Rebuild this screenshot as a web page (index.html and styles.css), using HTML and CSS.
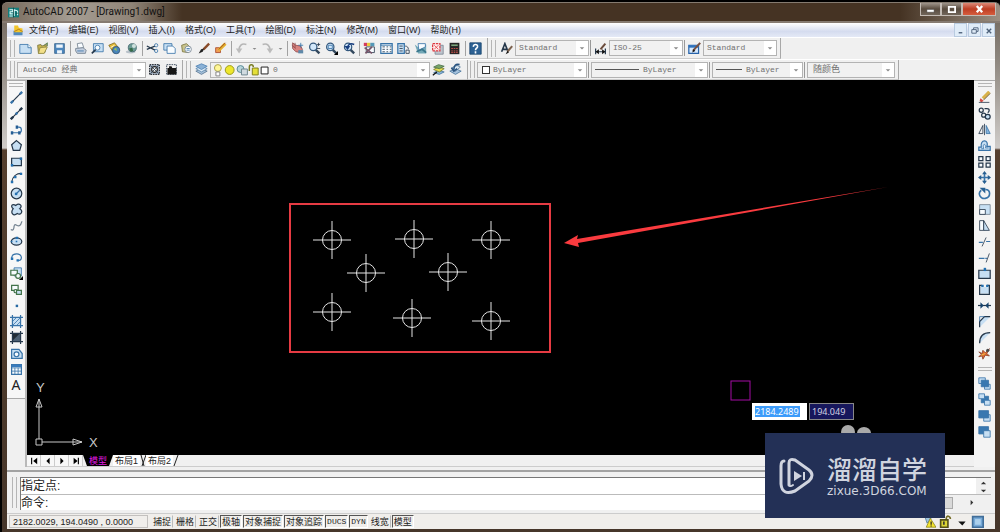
FILE: index.html
```html
<!DOCTYPE html>
<html lang="zh-CN">
<head>
<meta charset="utf-8">
<title>AutoCAD 2007 - [Drawing1.dwg]</title>
<link rel="stylesheet" href="styles.css">
</head>
<body>
<svg class="defs" aria-hidden="true">
  <symbol id="caret" viewBox="0 0 8 8"><path d="M1 3h6L4 6z" fill="#8a8a8a"/></symbol>
  <symbol id="mag" viewBox="0 0 16 16"><path d="M9 9l5 5" stroke="#34495e" stroke-width="3"/><circle cx="6.500" cy="6" r="4.500" fill="#d3e8fa" stroke="#34587d" stroke-width="1.500"/></symbol>
  <symbol id="target" viewBox="0 0 40 40"><circle cx="20" cy="20" r="9.500"/><path d="M1 20h38M20 1v38"/></symbol>
</svg>
<div class="window">
  <header class="titlebar">
    <svg class="app-icon" viewBox="0 0 16 16"><path fill="#137d7b" d="M0 1h16v14H0z"/><path fill="none" stroke="#e5ffff" stroke-width="1.500" d="M2 4h5v3H3v3h4M9 13V4l5 2v6M2 13h5"/><path stroke="#083c3b" d="M8 1v14M11 9h4"/></svg>
    <h1>AutoCAD 2007 - [Drawing1.dwg]</h1>
    <div class="caption-buttons">
      <button aria-label="最小化"><svg viewBox="0 0 12 10"><path d="M2 5h8v3H2z" fill="#fff" stroke="#444" stroke-width=".5"/></svg></button>
      <button aria-label="最大化"><svg viewBox="0 0 12 10"><path d="M3 2h7v6H3z" fill="none" stroke="#fff" stroke-width="2"/></svg></button>
      <button class="close" aria-label="关闭"><svg viewBox="0 0 12 10"><path d="M3 1l6 7M9 1L3 8" stroke="#fff" stroke-width="2.500"/></svg></button>
    </div>
  </header>
  <div class="client">
    <nav class="menubar">
      <svg class="doc-icon" viewBox="0 0 16 16"><path fill="#5289bb" d="M2 9h12v6H2z"/><path fill="#f2c52b" d="M3 2h5l1 3 5 1v5H3z"/><path d="M3 10l6-3 5 3" stroke="#a76b13" fill="none"/></svg>
      <button>文件(F)</button><button>编辑(E)</button><button>视图(V)</button><button>插入(I)</button><button>格式(O)</button><button>工具(T)</button><button>绘图(D)</button><button>标注(N)</button><button>修改(M)</button><button>窗口(W)</button><button>帮助(H)</button>
      <div class="mdi">
        <button aria-label="最小化文档"><svg viewBox="0 0 10 10"><path d="M3 7.500h4" stroke="#4c6079" stroke-width="1.500"/></svg></button>
        <button aria-label="还原文档"><svg viewBox="0 0 10 10"><path d="M4 4V2h5v4H7M2 4h5v4H2z" fill="none" stroke="#4c6079"/></svg></button>
        <button aria-label="关闭文档"><svg viewBox="0 0 10 10"><path d="M3 3l5 5M8 3L3 8" stroke="#4c6079" stroke-width="1.500"/></svg></button>
      </div>
    </nav>

    <div class="toolrow standard">
      <div class="toolbar">
        <i class="grip"></i>
        <button aria-label="新建"><svg class="ic" viewBox="0 0 16 16"><path class="b fl" d="M1 3h10l4 4v7H1z"/><path class="b fw" d="M11 3v4h4"/></svg></button>
        <button aria-label="打开"><svg class="ic" viewBox="0 0 16 16"><path d="M2 4l4-1 1 2 6-2-2 10-8 1z" fill="#c9b450" stroke="#78733b"/><path d="M5 7l9-1-4 8-7 0z" fill="#f3e08a" stroke="#8f8843"/><path d="M10 4l4-3v4" stroke="#4a7541"/></svg></button>
        <button aria-label="保存"><svg class="ic" viewBox="0 0 16 16"><path d="M2 2h12v12H2z" fill="#4c86bd" stroke="#3b678f"/><path d="M4 3h8v4H4zM5 10h6v4H5z" fill="#edf5fc"/></svg></button>
        <i class="sep"></i>
        <button aria-label="打印"><svg class="ic" viewBox="0 0 16 16"><path class="g fw" d="M4 2l6-1 2 6-7 1z"/><path class="g" fill="#c3cede" d="M2 8l9-1 4 3-1 4H4l-2-3z"/><path class="b" d="M4 11h8"/></svg></button>
        <button aria-label="打印预览"><svg class="ic" viewBox="0 0 16 16"><path class="b fl" d="M3 2h12v10H3z"/><path class="d" stroke-width="2" d="M6 9l-5 5"/><circle class="b fw" cx="8" cy="7" r="3"/></svg></button>
        <button aria-label="发布"><svg class="ic" viewBox="0 0 16 16"><path d="M1 4l7-3 5 6-7 5z" fill="#e7bd36" stroke="#7d6924"/><circle cx="10" cy="10" r="4.500" fill="#4a85ba" stroke="#315576"/><path d="M7 9l3-2 1 4z" fill="#95c55d"/><path d="M3 7l5-3" stroke="#fff"/></svg></button>
        <button aria-label="三维 DWF"><svg class="ic" viewBox="0 0 16 16"><ellipse cx="7" cy="12" rx="6" ry="2" fill="#b9c2ca"/><circle cx="9" cy="7" r="5" fill="#6d9b96" stroke="#3d646a"/><circle cx="11" cy="5" r="2.500" fill="#cfe1dd"/><path d="M5 8l4-1 1 4-3 1z" fill="#356b47"/></svg></button>
        <i class="sep"></i>
        <button aria-label="剪切"><svg class="ic" viewBox="0 0 16 16"><path class="d" stroke-width="1.500" d="M1 5l10 5M1 9l10-4"/><circle class="b" cx="12.500" cy="4" r="2"/><circle class="b" cx="12.500" cy="11" r="2"/></svg></button>
        <button aria-label="复制"><svg class="ic" viewBox="0 0 16 16"><path class="b fl" d="M1 2h10v8H1z"/><path class="b fw" d="M5 5h7l3 3v6H5z"/></svg></button>
        <button aria-label="粘贴"><svg class="ic" viewBox="0 0 16 16"><path d="M2 4l6-2 4 4-2 7-7-1z" fill="#c9c48d" stroke="#78713b"/><circle class="g fw" cx="10" cy="9" r="4"/><path class="b" d="M8 8h4M8 10h4"/></svg></button>
        <button aria-label="特性匹配"><svg class="ic" viewBox="0 0 16 16"><path d="M15 2L8 9" stroke="#8a4b28" stroke-width="3"/><path d="M9 8l-2 4-5 2 3-5z" fill="#222"/></svg></button>
        <button aria-label="块编辑器"><svg class="ic" viewBox="0 0 16 16"><path d="M2 7h6v6H2z" fill="#ef9e54" stroke="#a8452b"/><path d="M14 2L6 10" stroke="#e4b22c" stroke-width="4"/><path d="M14 1L6 9" stroke="#913a26"/></svg></button>
        <i class="sep"></i>
        <button aria-label="放弃"><svg class="ic" viewBox="0 0 16 16"><path d="M14 3C8 1 5 5 5 10" stroke="#b6b6b6" stroke-width="2"/><path d="M1 8h8l-4 6z" fill="#bcbcbc"/></svg></button><button class="drop" aria-label="放弃列表"><svg viewBox="0 0 8 8"><use href="#caret"/></svg></button>
        <button aria-label="重做"><svg class="ic" viewBox="0 0 16 16"><path d="M2 3c6-2 9 2 9 7" stroke="#b6b6b6" stroke-width="2"/><path d="M7 8h8l-4 6z" fill="#bcbcbc"/></svg></button><button class="drop" aria-label="重做列表"><svg viewBox="0 0 8 8"><use href="#caret"/></svg></button>
        <i class="sep"></i>
        <button aria-label="实时平移"><svg class="ic" viewBox="0 0 16 16"><path d="M2 1l4 3 6 1 2 4-2 4-6-1-4-4z" fill="#d88380" stroke="#8f4b4b"/><path d="M1 4l5 4M5 1v6" stroke="#8f4b4b"/><path d="M9 4h6M12 1v6" stroke="#3474a8"/><path d="M9 10h6v4H9z" fill="#5f89a9"/></svg></button>
        <button aria-label="实时缩放"><svg class="ic" viewBox="0 0 16 16"><use href="#mag"/><path class="d" d="M11 3h4M13 1v4M11 8h4"/></svg></button>
        <button aria-label="窗口缩放"><svg class="ic" viewBox="0 0 16 16"><use href="#mag"/><path class="b" d="M4 4h5v4H4z"/><path fill="#000" d="M16 11v5h-5z"/></svg></button>
        <button aria-label="缩放上一个"><svg class="ic" viewBox="0 0 16 16"><g transform="translate(1)"><use href="#mag"/></g><path d="M15 3c-5-2-7 0-8 3" stroke="#183e80" stroke-width="2"/><path d="M3 5h7l-3 5z" fill="#183e80"/></svg></button>
        <i class="sep"></i>
        <button aria-label="特性"><svg class="ic" viewBox="0 0 16 16"><path d="M1 1h4v4H1z" fill="#d43c5d"/><path d="M5 1h4v4H5z" fill="#ecc939"/><path d="M9 1h5v4H9z" fill="#5598b8"/><path class="d fw" d="M4 6h10v7H4z"/><path d="M2 7l9 7M11 6l-8 8" stroke="#765468" stroke-width="2"/></svg></button>
        <button aria-label="设计中心"><svg class="ic" viewBox="0 0 16 16"><path class="b fw" stroke-width="1.500" d="M1 2h14v12H1z"/><path class="b" d="M1 4h14"/><path class="d" d="M3 6h3M3 9h3M3 12h3M8 6h2M12 6h2M8 9h2M12 9h2M8 12h2M12 12h2"/></svg></button>
        <button aria-label="工具选项板"><svg class="ic" viewBox="0 0 16 16"><path class="b fl" stroke-width="1.500" d="M1 2h8v12H1z"/><path class="d" d="M3 5h4M3 8h4M3 11h4M10 5c3 0 4 2 4 4M11 10h4v4h-4z"/></svg></button>
        <button aria-label="图纸集"><svg class="ic" viewBox="0 0 16 16"><path d="M1 3l5 4 9-4v11H5z" fill="#73a8b7"/><path class="b fw" d="M5 2h9v4l-8 4z"/><path d="M3 12l7-3 5 4" stroke="#38758b" stroke-width="2"/></svg></button>
        <button aria-label="标记集"><svg class="ic" viewBox="0 0 16 16"><path d="M5 4h10v11H5z" fill="#bec5ce" stroke="#7b8794"/><path d="M2 2h9v9H2z" fill="#ffe8e8" stroke="#db3940" stroke-width="1.500" stroke-dasharray="3 1"/><path d="M4 4l5 5M9 4L4 9" stroke="#e04447"/></svg></button>
        <button aria-label="计算器"><svg class="ic" viewBox="0 0 16 16"><path d="M2 1h12v14H2z" fill="#252525"/><path d="M4 3h8v2H4z" fill="#7ca57b"/><path d="M4 8h8M4 11h8M4 13h8" stroke="#e05750" stroke-dasharray="2 1"/></svg></button>
        <i class="sep"></i>
        <button aria-label="帮助"><svg class="ic" viewBox="0 0 16 16"><path d="M1 1h14v14H1z" fill="#2d6193" stroke="#18446e"/><path d="M5.500 6C5 2 11 2 10.500 6 10 8 8 7.500 8 10M8 11.500V14" stroke="#fff" stroke-width="2"/></svg></button>
      </div>
      <div class="toolbar styles">
        <i class="grip"></i>
        <button aria-label="文字样式"><svg class="ic" viewBox="0 0 16 16"><path class="d" stroke-width="2" d="M2 12L6 2l4 10M3 9h6"/><path d="M15 5l-6 7" stroke="#7b614d" stroke-width="2.500"/><path d="M9 11l-2 4 4-2z" fill="#111"/></svg></button>
        <span class="combo w-style"><select aria-label="文字样式名"><option>Standard</option></select><svg viewBox="0 0 8 8"><use href="#caret"/></svg></span>
        <i class="line"></i>
        <button aria-label="标注样式"><svg class="ic" viewBox="0 0 16 16"><path class="d" stroke-width="1.500" d="M2 8v7M14 8v7M2 12h12"/><path d="M2 12l4-3v6zM14 12l-4-3v6z" fill="#111"/><path d="M14 2L8 9" stroke="#6b4c3c" stroke-width="2.500"/></svg></button>
        <span class="combo w-style"><select aria-label="标注样式名"><option>ISO-25</option></select><svg viewBox="0 0 8 8"><use href="#caret"/></svg></span>
        <i class="line"></i>
        <button aria-label="表格样式"><svg class="ic" viewBox="0 0 16 16"><path d="M1 4h12v10H1z" fill="#d7eaff" stroke="#2763aa" stroke-width="1.500"/><path d="M1 4h12v3H1z" fill="#2f72bd"/><path d="M15 1L6 11" stroke="#785142" stroke-width="2.500"/><path d="M7 9l-2 4 4-2z" fill="#111"/></svg></button>
        <span class="combo w-style"><select aria-label="表格样式名"><option>Standard</option></select><svg viewBox="0 0 8 8"><use href="#caret"/></svg></span>
      </div>
    </div>

    <div class="toolrow">
      <div class="toolbar workspace">
        <i class="grip"></i>
        <span class="combo w-space"><select aria-label="工作空间"><option>AutoCAD 经典</option></select><svg viewBox="0 0 8 8"><use href="#caret"/></svg></span>
        <button aria-label="工作空间设置"><svg class="ic" viewBox="0 0 16 16"><path d="M2 2h12v12H2z" fill="#aebdce" stroke="#30353c" stroke-width="1.500" stroke-dasharray="2 1"/><circle cx="8" cy="8" r="3.500" fill="#eee" stroke="#222" stroke-width="1.500"/><path class="d" d="M3 3l10 10M13 3L3 13"/></svg></button>
        <button aria-label="我的工作空间"><svg class="ic" viewBox="0 0 16 16"><path class="d" stroke-dasharray="2 1" d="M2 2h12v12H2z"/><path fill="#171717" d="M3 6h2V4h3l1 2h5v8H3z"/></svg></button>
      </div>
      <div class="toolbar layers">
        <i class="grip"></i>
        <button aria-label="图层特性"><svg class="ic" viewBox="0 0 16 16"><path d="M1 10l7-3 7 3-7 4z" fill="#a7c1da" stroke="#5b7892"/><path d="M1 7l7-3 7 3-7 4z" fill="#dcebf7" stroke="#5b86ad"/><path d="M1 4l7-3 7 3-7 4z" fill="#8ab1d6" stroke="#4f82b4"/></svg></button>
        <span class="combo w-layer">
          <svg class="layer-state" viewBox="0 0 60 14"><circle cx="7" cy="5" r="3.500" fill="#fff797" stroke="#aaa24c"/><path d="M5 9h4v4H5z" fill="#fff" stroke="#888"/><circle cx="19" cy="7" r="4.500" fill="#eee72c" stroke="#9a9920"/><circle cx="30" cy="6" r="3.500" fill="#b7d5dc" stroke="#5b8b96"/><path d="M31 6h6v6h-6z" fill="#d1dbe0" stroke="#6e8791"/><path d="M39 8V4c0-3 4-3 4 0" fill="none" stroke="#777b20" stroke-width="1.500"/><path d="M42 5h6v7h-6z" fill="#e4df38" stroke="#82801d"/><path d="M51 4h7v7h-7z" fill="#fff" stroke="#222"/></svg>
          <select aria-label="图层"><option>0</option></select><svg viewBox="0 0 8 8"><use href="#caret"/></svg></span>
        <button aria-label="置为当前图层"><svg class="ic" viewBox="0 0 16 16"><path d="M2 12l6-3 7 2-6 3z" fill="#8db6d9" stroke="#47779f"/><path d="M2 8l6-3 7 2-6 4z" fill="#e8df52" stroke="#777b2b"/><path d="M2 5l6-3 7 2-6 3z" fill="#79a567" stroke="#466e47"/><path d="M1 15l5-4" stroke="#111" stroke-width="1.500"/></svg></button>
        <button aria-label="上一个图层"><svg class="ic" viewBox="0 0 16 16"><path d="M1 10l7-3 7 3-7 4z" fill="#a5c2dd" stroke="#4a769e"/><path d="M3 6l7-3 4 2-6 5z" fill="#d8e6f1" stroke="#537899"/><path d="M13 2c-5-1-7 1-7 6M3 6l3 4 4-3" stroke="#28527e" stroke-width="2"/></svg></button>
      </div>
      <div class="toolbar props">
        <i class="grip"></i>
        <span class="combo w-color"><i class="swatch"></i><select aria-label="颜色"><option>ByLayer</option></select><svg viewBox="0 0 8 8"><use href="#caret"/></svg></span>
        <i class="line"></i>
        <span class="combo w-ltype"><i class="rule"></i><select aria-label="线型"><option>ByLayer</option></select><svg viewBox="0 0 8 8"><use href="#caret"/></svg></span>
        <i class="line"></i>
        <span class="combo w-lweight"><i class="rule short"></i><select aria-label="线宽"><option>ByLayer</option></select><svg viewBox="0 0 8 8"><use href="#caret"/></svg></span>
        <i class="line"></i>
        <span class="combo w-plot"><select aria-label="打印样式"><option>随颜色</option></select><svg viewBox="0 0 8 8"><use href="#caret"/></svg></span>
      </div>
    </div>

    <main class="workarea">
      <div class="side draw">
        <div class="palette">
        <i class="grip flat"></i>
        <button aria-label="直线"><svg class="ic" viewBox="0 0 16 16"><path class="d" stroke-width="1.500" d="M3 13L13 3"/><path class="b" stroke-width="3" d="M1 15l3-3M12 4l3-3"/></svg></button>
        <button aria-label="构造线"><svg class="ic" viewBox="0 0 16 16"><path class="d" stroke-width="1.500" d="M1 15L15 1"/><path class="d" stroke-width="3" d="M1 15l3-3M12 4l3-3"/><path class="b" stroke-width="3" d="M7 9l2-2"/></svg></button>
        <button aria-label="多段线"><svg class="ic" viewBox="0 0 16 16"><path class="b" stroke-width="1.500" d="M2 12h9c4 0 4-7 0-7H8"/><path fill="#245d94" d="M1 10h3v4H1zM7 3h3v4H7zM10 10h3v4h-3z"/></svg></button>
        <button aria-label="正多边形"><svg class="ic" viewBox="0 0 16 16"><path class="d fl" stroke-width="1.500" d="M8 2l6 5-2 7H4L2 7z"/></svg></button>
        <button aria-label="矩形"><svg class="ic" viewBox="0 0 16 16"><path class="d fl" stroke-width="1.500" d="M2 4h12v9H2z"/><path fill="#2370b1" d="M1 11h3v3H1zM12 3h3v3h-3z"/></svg></button>
        <button aria-label="圆弧"><svg class="ic" viewBox="0 0 16 16"><path class="d" stroke-width="1.500" d="M2 14C3 7 8 3 14 3"/><path fill="#2370b1" d="M1 12h3v3H1zM5 6h3v3H5zM12 2h3v3h-3z"/></svg></button>
        <button aria-label="圆"><svg class="ic" viewBox="0 0 16 16"><circle class="d fl" cx="8" cy="8" r="6.500" stroke-width="1.500"/><path class="b" stroke-width="1.500" d="M8 8l4-4"/><path fill="#2370b1" d="M6 7h3v3H6z"/></svg></button>
        <button aria-label="修订云线"><svg class="ic" viewBox="0 0 16 16"><path class="d fl" stroke-width="1.500" d="M4 7C0 4 3 0 7 3c5-4 9 1 5 4 5 3 1 9-3 6-5 4-9-1-5-6z"/></svg></button>
        <button aria-label="样条曲线"><svg class="ic" viewBox="0 0 16 16"><path class="g" stroke-width="1.500" d="M1 13c3 2 4-1 4-4 1-6 5 3 8-2 1-2 1-3 2-4"/></svg></button>
        <button aria-label="椭圆"><svg class="ic" viewBox="0 0 16 16"><ellipse class="d fl" cx="8" cy="8" rx="6.500" ry="4.500" stroke-width="1.500"/><path fill="#2370b1" d="M7 2h3v3H7zM7 7h2v2H7zM1 7h2v2H1z"/></svg></button>
        <button aria-label="椭圆弧"><svg class="ic" viewBox="0 0 16 16"><path class="b" stroke-width="1.500" d="M2 9c0-7 12-7 12-1 0 3-3 4-5 4"/><path fill="#2370b1" d="M1 8h3v3H1zM8 10h3v3H8z"/></svg></button>
        <button aria-label="插入块"><svg class="ic" viewBox="0 0 16 16"><path class="b fl" d="M5 1h9v10H5z"/><path class="n fw" stroke-width="1.500" d="M1 4h8v6H1z"/><circle class="n fw" cx="10" cy="11" r="3" stroke-width="1.500"/><path fill="#000" d="M16 11v5h-5z"/></svg></button>
        <button aria-label="创建块"><svg class="ic" viewBox="0 0 16 16"><path class="n fw" stroke-width="1.500" d="M2 3h8v6H2z"/><circle class="n fw" cx="7" cy="10" r="2" stroke-width="1.500"/><path class="n fl" stroke-width="1.500" d="M8 9h6v5H8z"/></svg></button>
        <button aria-label="点"><svg class="ic" viewBox="0 0 16 16"><path fill="#2769a3" d="M7 7h3v3H7z"/></svg></button>
        <button aria-label="图案填充"><svg class="ic" viewBox="0 0 16 16"><path class="fl" d="M3 3h10v10H3z"/><path class="b" d="M3 8l5-5M3 13L13 3M8 13l5-5"/><path class="b" stroke-width="1.500" d="M3 0v16M13 0v16M0 3h16M0 13h16"/></svg></button>
        <button aria-label="渐变色"><svg class="ic" viewBox="0 0 16 16"><path fill="#4d6073" d="M3 3h10v10H3z"/><path fill="#222c36" d="M3 3h9L3 12z"/><path class="d" stroke-width="1.500" d="M3 0v16M13 0v16M0 3h16M0 13h16"/></svg></button>
        <button aria-label="面域"><svg class="ic" viewBox="0 0 16 16"><path class="b fl" stroke-width="1.500" d="M2 3h9l4 5v6H2z"/><circle class="b fw" cx="8" cy="9" r="3" stroke-width="1.500"/></svg></button>
        <button aria-label="表格"><svg class="ic" viewBox="0 0 16 16"><path class="b fw" stroke-width="1.500" d="M2 2h12v12H2z"/><path class="b" d="M2 6h12M2 10h12M6 6v8M10 6v8"/><path fill="#397bbd" d="M2 2h12v3H2z"/></svg></button>
        <button class="mtext" aria-label="多行文字">A</button>
        </div>
      </div>

      <section class="viewport">
        <div class="canvas">
          <svg class="drawing" aria-label="模型空间">
            <g class="ucs"><path d="M9 359h6v6H9zM12 359v-32M15 362h31M12 319l-3 8h6zM46 359v6l9-3zM12 319v8M46 362h9"/><text x="9" y="312">Y</text><text x="62" y="367">X</text></g>
            <g class="targets">
              <use href="#target" x="285" y="140" width="40" height="40"/><use href="#target" x="367" y="139" width="40" height="40"/><use href="#target" x="444" y="140" width="40" height="40"/>
              <use href="#target" x="319" y="173" width="40" height="40"/><use href="#target" x="401" y="172" width="40" height="40"/>
              <use href="#target" x="285" y="212" width="40" height="40"/><use href="#target" x="365" y="218" width="40" height="40"/><use href="#target" x="444" y="221" width="40" height="40"/>
            </g>
            <rect class="mark" x="263" y="124" width="260" height="148"/>
            <path class="arrow" d="M537 163l14-8-1 4 311-52-310 56 1 4z"/>
            <rect class="pickbox" x="704" y="301" width="19" height="19"/>
            <ellipse cx="821" cy="352" rx="7" ry="7" fill="#aaa"/><ellipse cx="837" cy="353" rx="7" ry="6" fill="#aaa"/>
          </svg>
          <div class="dyn"><label class="active"><input aria-label="X 坐标" value="2184.2489"></label><label><input aria-label="Y 坐标" value="194.049"></label></div>
        </div>
        <div class="tabs">
          <button class="nav" aria-label="第一个布局"><svg viewBox="0 0 10 10"><path d="M2 1v8" stroke="#111" stroke-width="1.500"/><path d="M9 1v8L4 5z"/></svg></button>
          <button class="nav" aria-label="上一布局"><svg viewBox="0 0 10 10"><path d="M7 1v8L3 5z"/></svg></button>
          <button class="nav" aria-label="下一布局"><svg viewBox="0 0 10 10"><path d="M3 1v8l4-4z"/></svg></button>
          <button class="nav" aria-label="最后布局"><svg viewBox="0 0 10 10"><path d="M8 1v8" stroke="#111" stroke-width="1.500"/><path d="M2 1v8l5-4z"/></svg></button>
          <button class="tab current">模型</button>
          <button class="tab">布局1</button><svg class="slash" viewBox="0 0 6 11"><path d="M1 0l3 11M6 0L2 11"/></svg>
          <button class="tab">布局2</button><svg class="slash" viewBox="0 0 6 11"><path d="M5 0L1 11"/></svg>
        </div>
      </section>

      <div class="side modify">
        <i class="grip flat"></i>
        <button aria-label="删除"><svg class="ic" viewBox="0 0 16 16"><path d="M14 1L6 9" stroke="#d8b149" stroke-width="4"/><path d="M15 3L7 11" stroke="#5c4930"/><path d="M3 9l4 3-3 2-2-2z" fill="#d64c45"/><path class="d" d="M1 14h13"/></svg></button>
        <button aria-label="复制对象"><svg class="ic" viewBox="0 0 16 16"><g class="d" stroke-width="1.500"><circle cx="4" cy="4" r="2.500"/><circle cx="7" cy="10" r="2.500"/><circle class="fl" cx="12" cy="12" r="3"/><path d="M8 2h3c4 0 3 4 1 5"/></g></svg></button>
        <button aria-label="镜像"><svg class="ic" viewBox="0 0 16 16"><path class="d" d="M8 1v14M6 3v10H1z"/><path class="b" fill="#86b4dc" d="M10 3v10h5z"/></svg></button>
        <button aria-label="偏移"><svg class="ic" viewBox="0 0 16 16"><path class="b fl" stroke-width="1.500" d="M1 14v-4h3C2 0 14 0 11 9h4v5z"/><path class="b fw" d="M4 12h3C5 5 10 5 9 11h4"/></svg></button>
        <button aria-label="阵列"><svg class="ic" viewBox="0 0 16 16"><path class="d fw" stroke-width="1.500" d="M1 2h5v5H1zM10 2h5v5h-5zM1 10h5v5H1zM10 10h5v5h-5z"/></svg></button>
        <button aria-label="移动"><svg class="ic" viewBox="0 0 16 16"><path class="b" stroke-width="2" d="M8 2v12M2 8h12"/><path fill="#285f91" d="M8 0l3 4H5zM8 16l3-4H5zM0 8l4-3v6zM16 8l-4-3v6z"/></svg></button>
        <button aria-label="旋转"><svg class="ic" viewBox="0 0 16 16"><path class="b" stroke-width="2" d="M4 4C-1 8 3 15 9 14c7-1 7-11 0-11"/><path fill="#285f91" d="M2 1h7v7z"/></svg></button>
        <button aria-label="缩放"><svg class="ic" viewBox="0 0 16 16"><path class="g fl" d="M2 2h13v12H2z"/><path class="d fw" d="M2 8h7v6H2z"/></svg></button>
        <button aria-label="拉伸"><svg class="ic" viewBox="0 0 16 16"><path class="d fw" d="M2 2h5v12H2z"/><path class="d fl" d="M7 2l7 12H7z"/></svg></button>
        <button aria-label="修剪"><svg class="ic" viewBox="0 0 16 16"><path class="b" stroke-width="1.500" d="M1 9h5M10 8h5"/><path class="d" d="M5 14l5-11"/></svg></button>
        <button aria-label="延伸"><svg class="ic" viewBox="0 0 16 16"><path class="b" stroke-width="1.500" d="M1 9h7M9 9h2"/><path class="d" d="M10 14l4-11"/></svg></button>
        <button aria-label="打断于点"><svg class="ic" viewBox="0 0 16 16"><path class="d fl" stroke-width="1.500" d="M1 4h14v10H1z"/><path fill="#2370b1" d="M7 1h3v4H7z"/></svg></button>
        <button aria-label="打断"><svg class="ic" viewBox="0 0 16 16"><path class="fl" d="M3 5h11v8H3z"/><path class="d" stroke-width="1.500" d="M5 3H2v11h12V3h-3"/><path fill="#2370b1" d="M4 2h3v3H4zM10 2h3v3h-3z"/></svg></button>
        <button aria-label="合并"><svg class="ic" viewBox="0 0 16 16"><path class="d" stroke-width="1.500" d="M0 8h16"/><path fill="#16426c" d="M3 4l4 4-4 4zM13 4L9 8l4 4z"/></svg></button>
        <button aria-label="倒角"><svg class="ic" viewBox="0 0 16 16"><path class="fl" d="M2 15V7l6-5h7z"/><path class="d" stroke-width="1.500" d="M2 15V8l6-6h7"/><path class="b" d="M2 8V2h6"/></svg></button>
        <button aria-label="圆角"><svg class="ic" viewBox="0 0 16 16"><path class="fl" d="M2 15C2 6 7 2 15 2z"/><path class="d" stroke-width="1.500" d="M2 15C2 6 7 2 15 2"/></svg></button>
        <button aria-label="分解"><svg class="ic" viewBox="0 0 16 16"><path d="M1 6l4 2 1-4 3 3 5-5-3 6 3 3-5-1-3 5-1-4-4 1 3-3z" fill="#df692e" stroke="#87412c"/><circle cx="12" cy="4" r="2" fill="#4a4a4a"/><path stroke="#f3d04d" d="M4 10l5-2"/></svg></button>
        <i class="grip flat split"></i>
        <button aria-label="前置"><svg class="ic" viewBox="0 0 16 16"><path class="b fl" d="M1 1h8v7H1zM8 9h7v6H8z"/><path class="b" fill="#3978b0" d="M4 4h9v8H4z"/></svg></button>
        <button aria-label="后置"><svg class="ic" viewBox="0 0 16 16"><path class="b" fill="#3978b0" d="M4 4h9v8H4z"/><path class="b fl" d="M1 1h7v6H1zM8 9h7v6H8z"/></svg></button>
        <button aria-label="置于对象之上"><svg class="ic" viewBox="0 0 16 16"><path class="b fl" d="M7 7h8v8H7z"/><path class="b" fill="#3978b0" d="M1 2h12v9H1z"/></svg></button>
        <button aria-label="置于对象之下"><svg class="ic" viewBox="0 0 16 16"><path class="b" fill="#3978b0" d="M1 2h12v9H1z"/><path class="b fl" d="M7 7h8v8H7z"/></svg></button>
      </div>
    </main>

    <section class="command">
      <i class="grip"></i>
      <div class="console">
        <div class="history"><output>指定点:</output><span class="spin"><button aria-label="向上滚动"><svg viewBox="0 0 8 8"><path d="M1 6h6L4 3z" fill="#333"/></svg></button><button aria-label="向下滚动"><svg viewBox="0 0 8 8"><path d="M1 3h6L4 6z" fill="#333"/></svg></button></span></div>
        <div class="prompt"><label for="cmd">命令:</label><input id="cmd"><span class="hscroll"><i></i><button aria-label="向右滚动"><svg viewBox="0 0 8 8"><path d="M3 1v6l3-3z" fill="#333"/></svg></button></span></div>
      </div>
    </section>

    <footer class="status">
      <output class="coords">2182.0029, 194.0490 , 0.0000</output>
      <button>捕捉</button><button>栅格</button><button>正交</button><button class="on">极轴</button><button class="on">对象捕捉</button><button class="on">对象追踪</button><button class="on latin">DUCS</button><button class="on latin">DYN</button><button>线宽</button><button class="on">模型</button>
      <div class="tray">
        <button aria-label="通信中心"><svg class="ic" viewBox="0 0 16 16"><path d="M2 1l8 3-5 6z" fill="#9dc3df" stroke="#527c9b"/><path d="M9 4l7 11H4z" fill="#f5e52c" stroke="#8c8422"/><path d="M10 8v4M10 13v1" stroke="#222" stroke-width="1.500"/></svg></button>
        <button aria-label="锁定"><svg class="ic" viewBox="0 0 16 16"><path d="M9 7V4c0-4 5-3 5 1" stroke="#746c25" stroke-width="2"/><path d="M2 6h9v9H2z" fill="#dad434" stroke="#555019" stroke-width="2"/><path d="M6 8v4" stroke="#333" stroke-width="2"/></svg></button>
        <button aria-label="状态栏菜单"><svg class="ic" viewBox="0 0 16 16"><path d="M4 8h9l-4 5z" fill="#111"/></svg></button>
        <button aria-label="全屏显示"><svg class="ic" viewBox="0 0 16 16"><path d="M2 2h13v13H2z" fill="#77a9d6" stroke="#416e99" stroke-width="2"/><path d="M5 5h7v7H5z" fill="#acd0ec"/></svg></button>
      </div>
    </footer>
  </div>
</div>
<aside class="watermark">
  <svg viewBox="0 0 36 38"><g fill="none" stroke="#d0d4df" stroke-linecap="round" stroke-linejoin="round"><path stroke-width="3" d="M10 28V6q0-5 6-3l14 10q6 5 0 11L16 34Q3 39 2 27V9q0-5 3-5"/><path stroke-width="2" d="M10 26q0 5 4 2"/></g><path fill="#d0d4df" d="M15 14l8 5-8 5z"/><path stroke="#d0d4df" stroke-width="2" d="M25 15v8"/></svg>
  <div><strong>溜溜自学</strong><span>zixue.3D66.COM</span></div>
</aside>
</body>
</html>
```
FILE: styles.css
```css
* { box-sizing: border-box; }
body {
  margin: 0;
  background: #000;
  color: #222;
  font: 9px/12px "Liberation Sans", "Noto Sans CJK SC", sans-serif;
}
button, select, input { font: inherit; color: inherit; margin: 0; padding: 0; border: 0; background: none; border-radius: 0; }
button { display: flex; align-items: center; justify-content: center; white-space: nowrap; }
svg { display: block; flex: none; }
.defs { position: absolute; width: 0; height: 0; }
i { flex: none; }

.window {
  display: flex;
  flex-direction: column;
  height: 100vh;
  margin-left: 2px;
  padding: 3px 5px 3px;
  border-top: 2px solid #000;
  border-radius: 6px 6px 0 0;
  background: linear-gradient(#6d6359, #8f8880 60px, #cfccc9 146px, #553f2e 148px, #46362a);
}

.titlebar {
  display: flex;
  align-items: center;
  gap: 4px;
  height: 21px;
  margin: -3px -5px 0;
  padding-left: 6px;
  border-top: 1px solid #857b70;
  border-bottom: 2px solid #867b72;
  border-radius: 6px 6px 0 0;
  background: linear-gradient(90deg, #75685a, #a59d93 70px, #8f8477 130px, #453323 180px, #453323 90%, #9b8f82);
}
.titlebar h1 { margin: 0; font: 10px/14px Roboto, sans-serif; color: #111; }
.app-icon { width: 11px; height: 11px; }
.caption-buttons { display: flex; align-self: flex-start; margin-left: auto; padding-right: 4px; }
.caption-buttons button { width: 21px; height: 13px; border: 1px solid #c3bbb4; border-top: 0; background: linear-gradient(#9e948a, #584b3e 50%, #71665a); }
.caption-buttons .close { width: 34px; background: linear-gradient(#dc8a78, #bd3e24 50%, #d65d3d); }
.caption-buttons svg { width: 11px; height: 9px; }

.client { display: flex; flex: 1; flex-direction: column; min-height: 0; background: #f0f0f0; }

.menubar { display: flex; align-items: center; gap: 10px; height: 14px; padding-left: 5px; background: linear-gradient(#fff, #d5dcef 60%, #e4e9f6); }
.doc-icon { width: 12px; height: 12px; margin-right: -5px; }
.mdi { display: flex; gap: 1px; margin-left: auto; align-self: stretch; }
.mdi button { width: 13px; border: 1px solid #b9cbe0; background: #e0ecf8; }
.mdi svg { width: 9px; height: 9px; }

.toolrow { display: flex; height: 21px; border-top: 1px solid #fff; }
.toolrow.standard { height: 22px; }
.toolbar { display: flex; align-items: center; padding: 0 3px; border-right: 1px solid #a8a8a8; border-bottom: 1px solid #ccc; }
.toolbar button { width: 17px; height: 17px; }
.toolbar .drop { width: 9px; }
.drop svg { width: 5px; height: 5px; }
.ic { width: 13px; height: 13px; fill: none; }
.grip { width: 5px; height: 17px; margin-right: 2px; border: 1px solid #b5b5b5; border-width: 0 1px; }
.sep { width: 1px; height: 15px; margin: 0 1px 0 2px; background: #a2a2a2; }
.line { width: 1px; height: 16px; margin: 0 2px 0 1px; background: #999; }
.styles .line { margin: 0 1px; }
.toolbar.workspace { padding-right: 2px; }
.toolbar.props { padding-left: 2px; }

.combo { display: flex; align-items: center; height: 16px; border: 1px solid #b3b3b3; background: #f1f1f1; color: #707070; font-family: "Liberation Mono", "Noto Sans CJK SC", monospace; font-size: 8px; }
.combo select { flex: 1; min-width: 0; height: 14px; padding-left: 3px; appearance: none; opacity: 1; }
.combo > svg:last-child { width: 12px; height: 14px; padding: 0 3px; background: #fff; }
.w-style { width: 74px; }
.w-space { width: 129px; }
.w-layer { width: 220px; }
.w-color { width: 110px; }
.w-ltype { width: 117px; }
.w-lweight { width: 91px; }
.w-plot { width: 88px; }
.w-plot select { font-size: 9px; }
.w-plot select, .w-space select { padding-left: 5px; }
.layer-state { width: 59px; height: 14px; }
.swatch { width: 8px; height: 8px; margin-left: 4px; border: 1px solid #333; background: #fff; }
.rule { width: 44px; height: 1px; margin: 0 1px 0 3px; background: #555; }
.rule.short { width: 26px; }

.b { stroke: #3873a8; }
.d { stroke: #26384b; }
.g { stroke: #72808e; }
.n { stroke: #42734a; }
.fl { fill: #c7dff3; }
.fw { fill: #f8fcff; }

.workarea { display: flex; flex: 1; min-height: 0; }
.side { display: flex; flex: none; flex-direction: column; align-items: center; width: 20px; border-top: 1px solid #aaa; }
.side button { width: 18px; height: 16px; flex: none; }
.draw { align-items: stretch; border-right: 2px solid #b9b9b9; }
.palette { display: flex; flex-direction: column; align-items: center; border-bottom: 1px solid #aaa; background: #f7f7f7; padding-bottom: 5px; }
.modify { width: 21px; background: #f3f3f3; }
.grip.flat { width: 14px; height: 4px; margin: 2px 0; border-width: 1px 0; }
.grip.split { margin: 6px 0 4px; }
.side .mtext { font: 14px/16px "Noto Sans", sans-serif; }

.viewport { display: flex; flex: 1; flex-direction: column; min-width: 0; }
.canvas { position: relative; flex: 1; min-height: 0; overflow: hidden; background: #000; }
.drawing { width: 100%; height: 100%; }
.ucs { fill: none; stroke: #c8c8c8; }
.ucs text { fill: #c8c8c8; stroke: none; font: 13px "Liberation Sans", sans-serif; }
.targets { fill: none; stroke: #e4e4e4; }
.mark { fill: none; stroke: #e63b43; stroke-width: 2; }
.arrow { fill: #fa3b3f; }
.pickbox { fill: none; stroke: #a30da3; }
.dyn { position: absolute; left: 725px; top: 323px; display: flex; gap: 2px; }
.dyn label { width: 45px; height: 17px; padding: 2px; border: 1px solid #888; background: #17175c; color: #d4d4e4; }
.dyn .active { width: 55px; border-color: #fff; background: #fff; }
.dyn input { display: block; width: 39px; height: 11px; font: 9px/11px "Noto Sans", sans-serif; }
.dyn .active input { width: 45px; background: #3c9bfa; color: #fff; }

.tabs { display: flex; height: 12px; border-bottom: 1px solid #ccc; }
.tabs .nav { width: 14px; border-right: 1px solid #ccc; background: #f7f7f7; }
.nav svg { width: 8px; height: 8px; }
.tab { padding: 0 2px; background: #fff; }
.tab.current { padding: 0 6px; background: #000; color: #e21be2; clip-path: polygon(0 0, 100% 0, calc(100% - 4px) 100%, 4px 100%); }
.slash { width: 6px; height: 11px; fill: none; stroke: #222; }

.command { display: flex; margin-top: 3px; padding: 5px 4px 3px 5px; border-top: 2px solid #a2a2a2; border-bottom: 1px solid #ccc; font-size: 12px; }
.command .grip { height: 31px; margin-right: 3px; }
.console { flex: 1; border-left: 1px solid #777; border-top: 1px solid #777; background: #fff; }
.history, .prompt { display: flex; align-items: center; height: 17px; line-height: 16px; }
.history { justify-content: space-between; border-bottom: 1px solid #bbb; }
.prompt { height: 15px; }
.prompt input { flex: 1; min-width: 0; }
.spin { width: 15px; background: #f0f0f0; }
.spin button { width: 15px; height: 8px; }
.spin svg, .hscroll svg { width: 7px; height: 7px; }
.hscroll { display: flex; align-items: center; justify-content: flex-end; width: 140px; padding-right: 16px; background: #f0f0f0; align-self: stretch; }
.hscroll i { flex: 1; height: 12px; margin-right: 15px; border: 1px solid #aaa; background: #d9d9d9; }

.status { display: flex; align-items: center; gap: 1px; height: 15px; padding-left: 2px; background: #f0eeeb; }
.coords { width: 139px; height: 13px; padding-left: 3px; margin-right: 2px; border: 1px solid #c2c0be; }
.status > button { height: 13px; padding: 0 1px; border: 1px solid #f0eeeb; border-right-color: #bbb; }
.status > .on { border-color: #555 #fff #fff #555; }
.status > .latin { font-family: "Liberation Mono", monospace; font-size: 8px; }
.tray { display: flex; margin-left: auto; padding-right: 10px; }
.tray button { width: 16px; height: 15px; }

.watermark { position: absolute; right: 55px; bottom: 14px; display: flex; align-items: center; gap: 12px; width: 180px; height: 85px; padding-left: 14px; background: #233056; color: #d0d4df; }
.watermark svg { width: 36px; height: 38px; }
.watermark strong { display: block; font: 500 25px/26px "Noto Sans CJK SC", sans-serif; }
.watermark span { display: block; margin-top: 4px; font: 12px/12px "DejaVu Sans", sans-serif; }
```
